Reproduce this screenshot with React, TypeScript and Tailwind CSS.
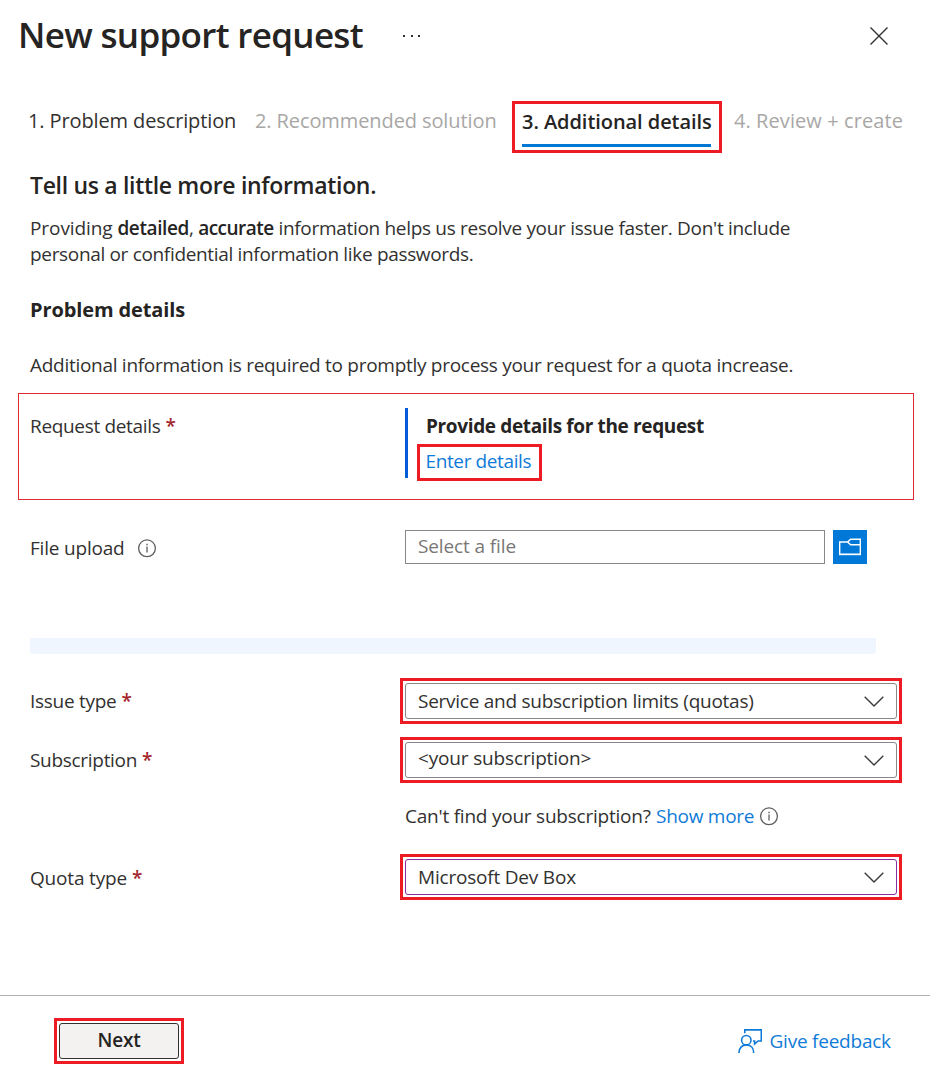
import type { ReactNode } from "react";

function InfoIcon() {
  return (
    <svg className="block h-5 w-5 shrink-0" viewBox="0 0 20 20" fill="none" stroke="#5f5e5d">
      <circle cx="10" cy="10.3" r="8.4" strokeWidth="1.3" />
      <path d="M10 8.6v5.9" strokeWidth="1.3" />
      <path d="M10 5.7v1.5" strokeWidth="1.4" />
    </svg>
  );
}

function FolderIcon() {
  return (
    <svg className="block h-[18px] w-[22px]" viewBox="0 0 22 18" fill="none" stroke="#fff" strokeWidth="1.4">
      <path d="M0.7 4H8.6L11.6 1.2H21.3V16.4H0.7Z" />
      <path d="M8.6 4L11.6 6.8H21.3" />
      <path d="M0 16.4H22" strokeWidth="1.6" />
    </svg>
  );
}

function FeedbackIcon() {
  return (
    <svg className="block h-6 w-6" viewBox="0 0 24 24" fill="none" stroke="#0f7bd8" strokeWidth="1.6">
      <circle cx="8.3" cy="11.2" r="4.7" />
      <path d="M0.9 23.9C0.9 19.2 4 15.9 8.4 15.9C12.8 15.9 15.7 19.2 15.7 23.9" />
      <path d="M6.8 4.2V0.9H23.3V12H20.1L16.6 15V12H15" />
    </svg>
  );
}

function Chevron() {
  return (
    <svg className="block h-[11px] w-5" viewBox="0 0 20 11" fill="none" stroke="#3b3a39" strokeWidth="1.4">
      <path d="M0.7 0.7L10 10L19.3 0.7" />
    </svg>
  );
}

function Label({ children, className, spacing }: { children: ReactNode; className?: string; spacing: string }) {
  return (
    <div className={"flex w-[375px] shrink-0 whitespace-pre " + (className ?? "")}>
      <span className={spacing}>{children}</span>
      <span className="ml-[5px] text-[19px] font-semibold text-[#a4262c]">*</span>
    </div>
  );
}

function Select({ children, border, text }: { children: ReactNode; border: string; text: string }) {
  return (
    <div className="h-[46px] w-[502px] shrink-0 border-[3px] border-[#ed1c24] p-[2px]">
      <div className={"flex h-9 items-center justify-between rounded-[3px] border pr-3 pl-3 " + border}>
        <span className={text}>{children}</span>
        <Chevron />
      </div>
    </div>
  );
}

export default function App() {
  return (
    <div className="flex h-[1081px] w-[930px] flex-col overflow-hidden bg-white font-['Open_Sans','Noto_Sans',sans-serif] text-[19px] leading-[26px] whitespace-nowrap text-[#323130]">
      <header className="flex h-[70px] shrink-0 items-start pl-[18px]">
        <h1 className="mt-[10px] w-[384px] text-[35px] leading-[50px] font-semibold tracking-[-0.68px] text-[#252423]">New support request</h1>
        <div className="mt-[35px] flex w-[468px] gap-[5.5px]">
          <i className="ml-[1px] h-[2px] w-[2px] bg-[#323130]" />
          <i className="h-[2px] w-[2px] bg-[#323130]" />
          <i className="h-[2px] w-[2px] bg-[#323130]" />
        </div>
        <svg className="mt-[27px] h-[18px] w-[18px]" viewBox="0 0 18 18" stroke="#323130" strokeWidth="1.4">
          <path d="M0.5 0.5L17.5 17.5M17.5 0.5L0.5 17.5" />
        </svg>
      </header>

      <nav className="flex h-[100px] shrink-0 items-start pt-[31px] text-[20px] leading-[26px]">
        <span className="mt-[7px] ml-[28px] w-[227px] tracking-[-0.12px]">1. Problem description</span>
        <span className="mt-[7px] w-[257px] tracking-[-0.1px] text-[#a8a7a6]">2. Recommended solution</span>
        <div className="h-[52px] w-[210px] border-[3px] border-[#ed1c24] pt-[5px] pl-[7px]">
          <div className="h-[38px] w-[189px] border-b-[3px] border-[#0078d4] font-semibold tracking-[-0.06px] text-[#252423]">3. Additional details</div>
        </div>
        <span className="mt-[7px] ml-[12px] tracking-[0.08px] text-[#a8a7a6]">4. Review + create</span>
      </nav>

      <section className="h-[223px] shrink-0 pl-[30px]">
        <h2 className="pt-px text-[23px] leading-[28px] font-semibold tracking-[-0.32px] text-[#252423]">Tell us a little more information.</h2>
        <p className="mt-[16px] tracking-[-0.31px]">
          <span className="tracking-[-0.08px]">Providing </span>
          <b className="font-semibold tracking-[-0.4px] text-[#252423]">detailed</b>, <b className="font-semibold tracking-[-0.5px] text-[#252423]">accurate</b> information helps us resolve your issue faster. Don't include
          <br />
          <span className="tracking-[-0.33px]">personal or confidential information like passwords.</span>
        </p>
        <h3 className="mt-[30px] text-[20px] leading-[26px] font-bold tracking-[-0.12px] text-[#252423]">Problem details</h3>
        <p className="mt-[29px] tracking-[-0.285px]">Additional information is required to promptly process your request for a quota increase.</p>
      </section>

      <section className="ml-[18px] flex h-[107px] w-[896px] shrink-0 border border-[#e02a33] pt-[14px] pl-[11px]">
        <Label className="mt-[5px]" spacing="tracking-[-0.33px]">Request details</Label>
        <div className="h-[70px] border-l-[3px] border-[#015cda]">
          <div className="mt-[5px] ml-[18px] font-bold tracking-[-0.36px] text-[#252423]">Provide details for the request</div>
          <a className="mt-[5px] ml-[9px] block h-[37px] w-[125px] border-[3px] border-[#ed1c24] pt-px pl-[5.5px] tracking-[-0.38px] text-[#0f7bd8]">Enter details</a>
        </div>
      </section>

      <section className="mt-[30px] flex h-[108px] shrink-0 pl-[30px]">
        <div className="mt-[5px] flex w-[375px]">
          <span className="w-[107px] tracking-[-0.2px]">File upload</span>
          <div className="mt-[3px]"><InfoIcon /></div>
        </div>
        <div className="h-[34px] w-[420px] border border-[#8a8886] pt-[2px] pl-3 tracking-[-0.12px] text-[#797775]">Select a file</div>
        <button className="ml-2 flex h-[34px] w-[34px] items-center justify-center bg-[#0078d7]"><FolderIcon /></button>
      </section>

      <div className="ml-[30px] h-4 w-[846px] shrink-0 rounded-b-[3px] bg-[#f0f6ff]" />

      <section className="flex h-[341px] shrink-0 flex-col pt-[24px] pl-[30px]">
        <div className="flex h-[59px]">
          <Label className="-mr-[5px] mt-[10px]" spacing="tracking-[-0.28px]">Issue type</Label>
          <Select border="border-[#8a8886]" text="tracking-[-0.26px]">Service and subscription limits (quotas)</Select>
        </div>
        <div className="flex h-[66px]">
          <Label className="-mr-[5px] mt-[10px]" spacing="tracking-[-0.3px]">Subscription</Label>
          <Select border="border-[#8a8886]" text="mb-[4px] tracking-[-0.16px]">{"<your subscription>"}</Select>
        </div>
        <div className="flex h-[51px] items-start pl-[375px]">
          <span className="w-[251px] tracking-[-0.23px]">Can't find your subscription?</span>
          <a className="w-[103px] tracking-[-0.27px] text-[#0f7bd8]">Show more</a>
          <div className="mt-[3px]"><InfoIcon /></div>
        </div>
        <div className="flex h-[46px]">
          <Label className="-mr-[5px] mt-[11px]" spacing="tracking-[-0.18px]">Quota type</Label>
          <Select border="border-[#8a2da5]" text="tracking-[-0.20px]">Microsoft Dev Box</Select>
        </div>
      </section>

      <footer className="flex h-[86px] shrink-0 items-start border-t border-[#b3b0ad] pl-[54px]">
        <div className="mt-[22px] h-[46px] w-[130px] border-[3px] border-[#ed1c24] p-[2px]">
          <button className="block h-9 w-[120px] rounded-[3px] border border-[#323130] bg-[#f3f2f1] pb-[2px] font-semibold tracking-[-0.25px] text-[#252423]">Next</button>
        </div>
        <div className="mt-[33px] ml-[554px]"><FeedbackIcon /></div>
        <a className="mt-[32px] ml-[7.5px] tracking-[-0.23px] text-[#0f7bd8]">Give feedback</a>
      </footer>
    </div>
  );
}
